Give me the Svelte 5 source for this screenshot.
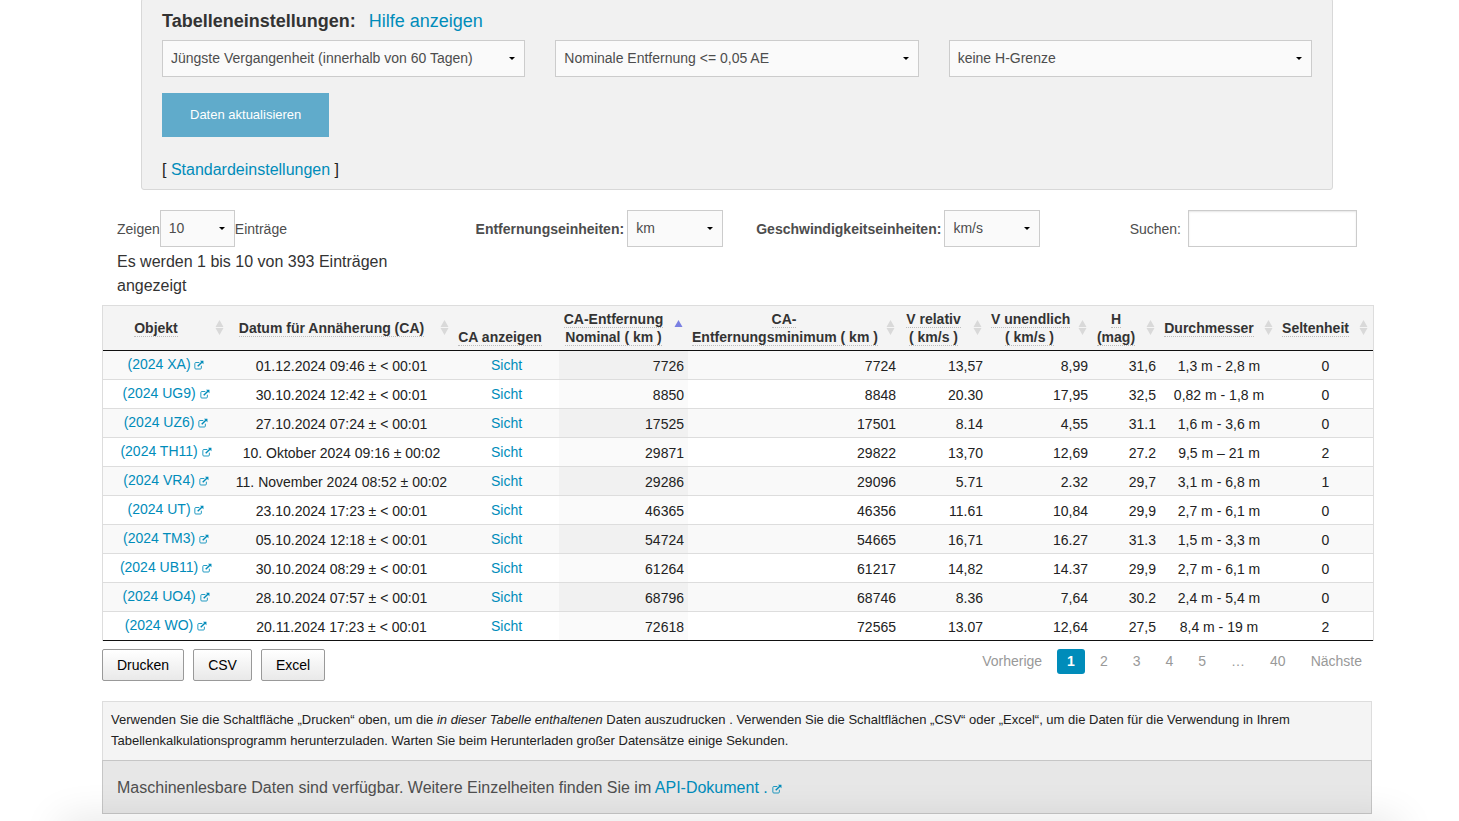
<script>
  const filters = [
    { id: 'period', label: 'Zeitraum', value: 'Jüngste Vergangenheit (innerhalb von 60 Tagen)' },
    { id: 'distance', label: 'Entfernung', value: 'Nominale Entfernung <= 0,05 AE' },
    { id: 'magnitude', label: 'H-Grenze', value: 'keine H-Grenze' }
  ];

  const columns = [
    { lines: ['Objekt'], width: 126, sort: 'both' },
    { lines: ['Datum für Annäherung (CA)'], width: 225, sort: 'both' },
    { lines: ['CA anzeigen'], width: 105, sort: 'none' },
    { lines: ['CA-Entfernung', 'Nominal ( km )'], width: 129, sort: 'asc' },
    { lines: ['CA-', 'Entfernungsminimum ( km )'], width: 212, sort: 'both' },
    { lines: ['V relativ', '( km/s )'], width: 87, sort: 'both' },
    { lines: ['V unendlich', '( km/s )'], width: 105, sort: 'both' },
    { lines: ['H', '(mag)'], width: 68, sort: 'both' },
    { lines: ['Durchmesser'], width: 118, sort: 'both' },
    { lines: ['Seltenheit'], width: 95, sort: 'both' }
  ];

  const rows = [
    ['(2024 XA)', '01.12.2024 09:46 ± < 00:01', '7726', '7724', '13,57', '8,99', '31,6', '1,3 m - 2,8 m', '0'],
    ['(2024 UG9)', '30.10.2024 12:42 ± < 00:01', '8850', '8848', '20.30', '17,95', '32,5', '0,82 m - 1,8 m', '0'],
    ['(2024 UZ6)', '27.10.2024 07:24 ± < 00:01', '17525', '17501', '8.14', '4,55', '31.1', '1,6 m - 3,6 m', '0'],
    ['(2024 TH11)', '10. Oktober 2024 09:16 ± 00:02', '29871', '29822', '13,70', '12,69', '27.2', '9,5 m – 21 m', '2'],
    ['(2024 VR4)', '11. November 2024 08:52 ± 00:02', '29286', '29096', '5.71', '2.32', '29,7', '3,1 m - 6,8 m', '1'],
    ['(2024 UT)', '23.10.2024 17:23 ± < 00:01', '46365', '46356', '11.61', '10,84', '29,9', '2,7 m - 6,1 m', '0'],
    ['(2024 TM3)', '05.10.2024 12:18 ± < 00:01', '54724', '54665', '16,71', '16.27', '31.3', '1,5 m - 3,3 m', '0'],
    ['(2024 UB11)', '30.10.2024 08:29 ± < 00:01', '61264', '61217', '14,82', '14.37', '29,9', '2,7 m - 6,1 m', '0'],
    ['(2024 UO4)', '28.10.2024 07:57 ± < 00:01', '68796', '68746', '8.36', '7,64', '30.2', '2,4 m - 5,4 m', '0'],
    ['(2024 WO)', '20.11.2024 17:23 ± < 00:01', '72618', '72565', '13.07', '12,64', '27,5', '8,4 m - 19 m', '2']
  ];

  const pages = ['Vorherige', '1', '2', '3', '4', '5', '…', '40', 'Nächste'];
</script>

{#snippet external()}
  <svg class="external" viewBox="0 0 14 14" aria-hidden="true">
    <path d="M7.5 3.5H2.6Q1.2 3.5 1.2 4.9V11.2Q1.2 12.6 2.6 12.6H8.9Q10.3 12.6 10.3 11.2V8" fill="none" stroke="currentColor" stroke-width="1.2" />
    <path d="M5.2 8.8 11 3" fill="none" stroke="currentColor" stroke-width="2" />
    <path d="M8.4 1H13.2V5.8Z" fill="currentColor" />
  </svg>
{/snippet}

<main>
  <section class="settings">
    <div class="heading">
      <h2>Tabelleneinstellungen:</h2>
      <a href="#hilfe">Hilfe anzeigen</a>
    </div>
    <div class="filters">
      {#each filters as f}
        <select id={f.id} aria-label={f.label}><option>{f.value}</option></select>
      {/each}
    </div>
    <button class="refresh" type="button">Daten aktualisieren</button>
    <p class="defaults">[ <a href="#standard">Standardeinstellungen</a> ]</p>
  </section>

  <section class="controls">
    <div class="length">
      <div class="field">
        <label for="len">Zeigen</label>
        <select id="len" class="len"><option>10</option></select>
        <label for="len">Einträge</label>
      </div>
      <p>Es werden 1 bis 10 von 393 Einträgen angezeigt</p>
    </div>
    <div class="field unit">
      <label for="dist">Entfernungseinheiten:</label>
      <select id="dist"><option>km</option></select>
    </div>
    <div class="field unit">
      <label for="speed">Geschwindigkeitseinheiten:</label>
      <select id="speed"><option>km/s</option></select>
    </div>
    <div class="field search">
      <label for="search">Suchen:</label>
      <input id="search" type="search" />
    </div>
  </section>

  <div class="table-wrap">
    <table>
      <colgroup>
        {#each columns as c}<col style="width: {c.width}px" />{/each}
      </colgroup>
      <thead>
        <tr>
          {#each columns as c}
            <th class:unsorted={c.sort === 'none'}>
              {#each c.lines as line, i}{#if i}<br />{/if}<span>{line}</span>{/each}
              {#if c.sort !== 'none'}
                <svg class="sort" viewBox="0 0 9 15" aria-hidden="true">
                  {#if c.sort === 'asc'}
                    <path d="M4.5 0 8.5 7H.5Z" fill="#7a80e2" />
                  {:else}
                    <path d="M4.5 0 8.5 7H.5ZM4.5 15 8.5 8H.5Z" fill="#d9d9d9" />
                  {/if}
                </svg>
              {/if}
            </th>
          {/each}
        </tr>
      </thead>
      <tbody>
        {#each rows as r}
          <tr>
            <td class="object"><a href="#objekt">{r[0]} {@render external()}</a></td>
            <td>{r[1]}</td>
            <td class="view"><a href="#sicht">Sicht</a></td>
            <td class="num sorted">{r[2]}</td>
            <td class="num">{r[3]}</td>
            <td class="num">{r[4]}</td>
            <td class="num">{r[5]}</td>
            <td class="num">{r[6]}</td>
            <td>{r[7]}</td>
            <td>{r[8]}</td>
          </tr>
        {/each}
      </tbody>
    </table>
  </div>

  <div class="table-footer">
    <div class="exports">
      <button type="button">Drucken</button>
      <button type="button">CSV</button>
      <button type="button">Excel</button>
    </div>
    <nav>
      {#each pages as p}
        {#if p === '…'}
          <span>{p}</span>
        {:else}
          <a href="#seite" class:current={p === '1'}>{p}</a>
        {/if}
      {/each}
    </nav>
  </div>

  <p class="note">
    Verwenden Sie die Schaltfläche „Drucken“ oben, um die <em>in dieser Tabelle enthaltenen</em> Daten auszudrucken . Verwenden Sie die Schaltflächen „CSV“ oder „Excel“, um die Daten für die Verwendung in Ihrem Tabellenkalkulationsprogramm herunterzuladen. Warten Sie beim Herunterladen großer Datensätze einige Sekunden.
  </p>
  <p class="api">
    Maschinenlesbare Daten sind verfügbar. Weitere Einzelheiten finden Sie im <a href="#api">API-Dokument . {@render external()}</a>
  </p>
</main>
<div class="edge-shadow"></div>

<style>
  :global(body) {
    background: #fff;
    overflow: hidden;
  }
  main,
  select,
  input,
  button {
    font-family: 'Liberation Sans', Arial, sans-serif;
  }
  main {
    display: flex;
    flex-direction: column;
    padding: 0 87px 0 102px;
    color: #222;
    font-size: 14px;
  }
  h2,
  p {
    margin: 0;
  }
  a {
    color: #008cba;
    text-decoration: none;
  }

  .settings {
    margin: -2px 39px 0;
    padding: 10px 20px 7px;
    background: #f1f1f1;
    border: 1px solid #d8d8d8;
    border-radius: 3px;
  }
  .heading {
    display: flex;
    gap: 13px;
    align-items: baseline;
    line-height: 24px;
    font-size: 18px;
  }
  h2 {
    font-size: 18px;
    color: #333;
  }
  .filters {
    display: grid;
    grid-template-columns: repeat(3, 1fr);
    gap: 30px;
    margin-top: 7px;
  }
  select {
    appearance: none;
    height: 37px;
    padding: 0 8px 2px;
    border: 1px solid #ccc;
    border-radius: 0;
    background: #fafafa
      url("data:image/svg+xml,%3Csvg xmlns='http://www.w3.org/2000/svg' width='6' height='3'%3E%3Cpath d='M0 0H6L3 3Z'/%3E%3C/svg%3E")
      no-repeat right 9px center;
    color: #4d4d4d;
    font-size: 14px;
  }
  .refresh {
    display: block;
    height: 44px;
    margin-top: 16px;
    padding: 0 28px 2px;
    border: 0;
    background: #60abcb;
    color: #fff;
    font-size: 13px;
  }
  .defaults {
    margin-top: 21px;
    line-height: 24px;
    font-size: 16px;
  }

  .controls {
    display: grid;
    grid-template-columns: 359fr 281fr 283fr 317fr;
    margin-top: 20px;
    padding: 0 15px;
  }
  .field {
    display: flex;
    align-items: center;
    height: 37px;
    color: #4d4d4d;
  }
  .length p {
    padding-right: 56px;
    color: #333;
    font-size: 16px;
    line-height: 24px;
    margin-top: 3px;
  }
  .len {
    width: 75px;
  }
  .unit {
    gap: 3px;
    font-weight: bold;
  }
  .unit select {
    width: 96px;
  }
  .search {
    justify-content: flex-end;
    gap: 7px;
  }
  input {
    box-sizing: border-box;
    width: 169px;
    height: 37px;
    border: 1px solid #ccc;
    box-shadow: inset 0 1px 2px rgba(0, 0, 0, 0.1);
  }

  .table-wrap {
    margin: 7px -2px 0 0;
  }
  table {
    width: 100%;
    table-layout: fixed;
    border-collapse: separate;
    border-spacing: 0;
    border: solid #ddd;
    border-width: 1px 1px 0;
    text-align: center;
    line-height: 20px;
  }
  th {
    position: relative;
    padding: 4px 24px 4px 4px;
    background: #f4f4f4;
    border-bottom: 1px solid #111;
    color: #333;
    line-height: 18px;
    white-space: nowrap;
  }
  th.unsorted {
    padding-right: 17px;
    vertical-align: bottom;
  }
  th span {
    border-bottom: 1px dotted #bbb;
  }
  .sort {
    position: absolute;
    right: 5px;
    top: 14px;
    width: 9px;
    height: 15px;
  }
  td {
    padding: 5px 4px 3px;
    border-bottom: 1px solid #ddd;
    white-space: nowrap;
  }
  tbody tr:nth-child(odd) {
    background: #f9f9f9;
  }
  tbody tr:last-child td {
    border-bottom-color: #111;
  }
  .object {
    padding: 3px 4px 5px;
  }
  .view {
    padding: 4px;
  }
  .num {
    text-align: right;
  }
  .sorted {
    background: #fafafa;
  }
  tr:nth-child(odd) .sorted {
    background: #f1f1f1;
  }
  .external {
    width: 10px;
    height: 10px;
    vertical-align: -1px;
  }

  .table-footer {
    display: flex;
    justify-content: space-between;
    align-items: flex-start;
    margin-top: 8px;
  }
  .exports {
    display: flex;
    gap: 9px;
  }
  .exports button {
    height: 32px;
    padding: 0 14px;
    border: 1px solid #999;
    border-radius: 2px;
    background: linear-gradient(#fff, #e9e9e9);
    color: #000;
    font-size: 14px;
  }
  nav {
    display: flex;
    gap: 5px;
    line-height: 25px;
  }
  nav a,
  nav span {
    padding: 0 10px;
    border-radius: 3px;
    color: #999;
  }
  nav .current {
    background: #008cba;
    color: #fff;
    font-weight: bold;
  }

  .note {
    margin-top: 20px;
    padding: 7px 8px 9px;
    border: 1px solid #ddd;
    background: #f4f4f4;
    font-size: 13px;
    line-height: 21px;
  }
  .api {
    padding: 15px 14px 13px;
    margin-top: -1px;
    border: 1px solid #c6c6c6;
    background: #e7e7e7;
    color: #4f4f4f;
    font-size: 16px;
    line-height: 24px;
  }
  .edge-shadow {
    position: fixed;
    left: 60px;
    right: 60px;
    bottom: -30px;
    height: 30px;
    box-shadow: 0 0 40px rgba(0, 0, 0, 0.12);
  }
</style>
